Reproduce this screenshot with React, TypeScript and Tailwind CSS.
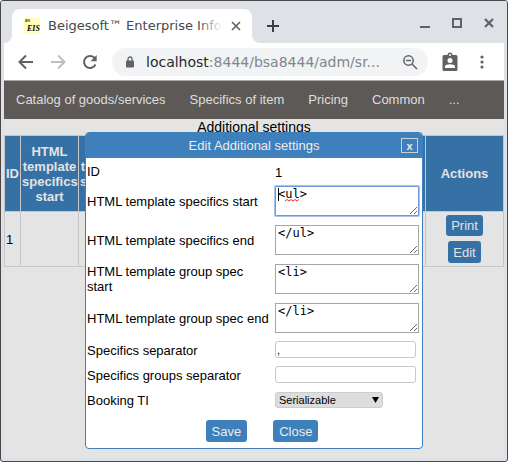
import type { ReactNode } from "react";

const menuItems = ["Catalog of goods/services", "Specifics of item", "Pricing", "Common", "..."];

function TabStrip() {
  return (
    <div className="flex h-[42px] items-end justify-between bg-[#dee1e6]">
      <div className="flex items-center">
        <div className="relative ml-[11px] flex h-[34px] w-60 items-center self-end rounded-t-lg bg-white pl-3">
          <svg viewBox="0 0 8 8" className="absolute bottom-0 -left-2 size-2" aria-hidden="true">
            <path d="M8 0v8H0a8 8 0 0 0 8-8z" fill="#fff" />
          </svg>
          <svg viewBox="0 0 8 8" className="absolute -right-2 bottom-0 size-2" aria-hidden="true">
            <path d="M0 0v8h8a8 8 0 0 1-8-8z" fill="#fff" />
          </svg>
          <svg viewBox="0 0 16 16" className="size-4 shrink-0" aria-hidden="true">
            <rect width="16" height="16" fill="#ffffb8" />
            <text x="1" y="4" fontSize="4" fontFamily="Liberation Serif, serif" fontStyle="italic" fontWeight="bold">BS</text>
            <text x="3" y="13" fontSize="8" fontFamily="Liberation Serif, serif" fontStyle="italic" fontWeight="bold">EIS</text>
          </svg>
          <div className="relative ml-2 w-[174px] overflow-hidden text-[13px] leading-5 whitespace-nowrap text-[#45484c]">
            Beigesoft™ Enterprise Info
            <div className="absolute inset-y-0 right-0 w-6 bg-linear-to-r from-transparent to-white" />
          </div>
          <button type="button" aria-label="Close tab" className="ml-1 p-1">
            <svg viewBox="0 0 12 12" className="size-3" stroke="#5f6368" strokeWidth="1.7">
              <path d="M2 2l8 8M10 2l-8 8" />
            </svg>
          </button>
        </div>
        <button type="button" aria-label="New tab" className="ml-[14px] p-px">
          <svg viewBox="0 0 12 12" className="size-3" stroke="#3c4043" strokeWidth="2">
            <path d="M6 0v12M0 6h12" />
          </svg>
        </button>
      </div>
      <div className="mb-[14px] flex items-center gap-5 pr-3">
        <button type="button" aria-label="Minimize">
          <svg viewBox="0 0 12 12" className="size-3">
            <path d="M1 9h10v2H1z" fill="#5f6368" />
          </svg>
        </button>
        <button type="button" aria-label="Maximize">
          <svg viewBox="0 0 12 12" className="size-3" fill="none" stroke="#5f6368" strokeWidth="2">
            <path d="M2 2h8v8H2z" />
          </svg>
        </button>
        <button type="button" aria-label="Close window">
          <svg viewBox="0 0 12 12" className="size-3" stroke="#5f6368" strokeWidth="2.2">
            <path d="M2 2l8 8M10 2l-8 8" />
          </svg>
        </button>
      </div>
    </div>
  );
}

function Toolbar() {
  return (
    <div className="flex h-[38px] items-center border-b border-[#a9a9ab] bg-white pr-[14px] pl-3">
      <button type="button" aria-label="Back">
        <svg viewBox="0 0 20 20" className="size-5" fill="none" stroke="#5f6368" strokeWidth="2">
          <path d="M17 10H4M10 3.500L3.500 10L10 16.500" />
        </svg>
      </button>
      <button type="button" aria-label="Forward" className="ml-3">
        <svg viewBox="0 0 20 20" className="size-5" fill="none" stroke="#bcbec1" strokeWidth="2">
          <path d="M3 10h13M10 3.500l6.500 6.500L10 16.500" />
        </svg>
      </button>
      <button type="button" aria-label="Reload" className="ml-3">
        <svg viewBox="0 0 20 20" className="size-5" fill="none" stroke="#5f6368" strokeWidth="2">
          <path d="M15.500 12.500A6 6 0 1 1 14.300 5.700L15.500 7" />
          <path d="M16.700 3v6.200h-6.200z" fill="#5f6368" stroke="none" />
        </svg>
      </button>
      <div className="ml-3 flex h-7 min-w-0 flex-1 items-center rounded-full bg-[#f1f3f4] pr-[10px] pl-[14px]">
        <svg viewBox="0 0 8 12" className="h-3 w-2 shrink-0" aria-hidden="true">
          <path d="M2 5V3a2 2 0 0 1 4 0v2" fill="none" stroke="#5f6368" strokeWidth="1.300" />
          <rect y="4.500" width="8" height="7" rx="1" fill="#5f6368" />
        </svg>
        <div className="ml-3 min-w-0 flex-1 truncate text-sm text-[#80868b]">
          <span className="text-[#27292c]">localhost</span>:8444/bsa8444/adm/sr...
        </div>
        <button type="button" aria-label="Zoom" className="shrink-0">
          <svg viewBox="0 0 16 16" className="size-4" fill="none" stroke="#5f6368" strokeWidth="1.500">
            <circle cx="6.500" cy="6.500" r="4.700" />
            <path d="M4 6.500h5M10 10l5 5" />
          </svg>
        </button>
      </div>
      <button type="button" aria-label="Profile" className="ml-[14px]">
        <svg viewBox="0 0 16 20" className="h-5 w-4">
          <path d="M2 3h3.500a2.500 2.500 0 0 1 5 0H14q1.500 0 1.500 1.500v13q0 1.500-1.500 1.500H2q-1.500 0-1.500-1.500v-13Q.5 3 2 3z" fill="#5f6368" />
          <circle cx="8" cy="3" r="1" fill="#fff" />
          <circle cx="8" cy="8.500" r="2.500" fill="#fff" />
          <path d="M3 16v-1.500c0-3 10-3 10 0V16z" fill="#fff" />
        </svg>
      </button>
      <button type="button" aria-label="Menu" className="ml-4">
        <svg viewBox="0 0 16 16" className="size-4" fill="#5f6368">
          <circle cx="8" cy="3" r="1.600" />
          <circle cx="8" cy="8" r="1.600" />
          <circle cx="8" cy="13" r="1.600" />
        </svg>
      </button>
    </div>
  );
}

function SettingsTable() {
  const head = "border border-[#c6c6c6] bg-[#3671a6] p-px font-bold text-[#e3e3e3]";
  const cell = "border border-[#c6c6c6] p-px";
  const action = "rounded-[3px] bg-[#3671a6] px-[5px] text-[13px] text-[#e3e3e3]";
  return (
    <table className="w-full table-fixed border-collapse text-[13px] leading-[15px]">
      <caption className="h-4 text-sm leading-4 text-black">Additional settings</caption>
      <colgroup>
        <col className="w-4" />
        <col className="w-[58px]" />
        <col className="w-[58px]" />
        <col />
        <col className="w-[78px]" />
      </colgroup>
      <thead>
        <tr className="h-[76px]">
          <th className={head}>ID</th>
          <th className={head}>HTML template specifics start</th>
          <th className={head}>HTML template specifics end</th>
          <th className={head} />
          <th className={head}>Actions</th>
        </tr>
      </thead>
      <tbody>
        <tr className="h-[55px]">
          <td className={cell}>1</td>
          <td className={cell} />
          <td className={cell} />
          <td className={cell} />
          <td className={cell}>
            <div className="flex flex-col items-center gap-[5px]">
              <button type="button" className={action + " h-[21px]"}>Print</button>
              <button type="button" className={action + " h-[22px]"}>Edit</button>
            </div>
          </td>
        </tr>
      </tbody>
    </table>
  );
}

function Field({ id, label, tall, children }: { id: string; label: string; tall?: boolean; children: ReactNode }) {
  return (
    <div className={"grid grid-cols-[183px_1fr] items-center gap-x-[5px] " + (tall ? "h-[39px]" : "h-[25px]")}>
      <label htmlFor={id} className="pt-px">{label}</label>
      <div className="relative flex">{children}</div>
    </div>
  );
}

function EditDialog() {
  const area = "block h-[30px] w-full resize overflow-hidden border bg-white px-[2px] text-xs leading-[14px] outline-none font-['DejaVu_Sans_Mono',monospace]";
  const input = "h-[17px] w-[141px] rounded-[3px] border border-[#c8c8c8] bg-white px-px text-[11px] outline-none";
  const button = "h-[22px] rounded-[3px] bg-[#3d80bb] px-[6px] text-[#ececec]";
  return (
    <div
      role="dialog"
      aria-label="Edit Additional settings"
      className="absolute top-[131px] left-1/2 w-[338px] -translate-x-1/2 overflow-hidden rounded border border-[#3d80bb] bg-white text-[13px] leading-[15px] text-black"
    >
      <div className="relative flex h-[25px] items-center justify-center bg-[#3d80bb] text-[#ececec]">
        <h2>Edit Additional settings</h2>
        <button type="button" aria-label="Close dialog" className="absolute right-1 flex h-[15px] w-[17px] items-center justify-center border border-[#d0d0d0] text-[11px] leading-3 font-bold">
          x
        </button>
      </div>
      <form>
        <div className="pr-[3px] pl-px">
          <div className="grid h-[23px] grid-cols-[183px_1fr] items-center gap-x-[5px] pt-1">
            <span>ID</span>
            <span className="pt-px">1</span>
          </div>
          <Field id="specStart" label="HTML template specifics start" tall>
            <textarea id="specStart" defaultValue="<ul>" className={area + " rounded-[1px] border-[#6f96dc] ring-1 ring-[#a9c3f3]"} />
            <div className="absolute top-[2px] left-[3px] h-[13px] w-px bg-black" />
            <svg viewBox="0 0 14 3" className="absolute top-[13px] left-[10px] h-[3px] w-[14px]" fill="none" stroke="#ee3333" aria-hidden="true">
              <path d="M0 2l2-1.500 2 1.500 2-1.500 2 1.500 2-1.500 2 1.500 2-1.500" />
            </svg>
          </Field>
          <Field id="specEnd" label="HTML template specifics end" tall>
            <textarea id="specEnd" defaultValue="</ul>" className={area + " border-[#a6a6a6]"} />
          </Field>
          <Field id="groupStart" label="HTML template group spec start" tall>
            <textarea id="groupStart" defaultValue="<li>" className={area + " border-[#a6a6a6]"} />
          </Field>
          <Field id="groupEnd" label="HTML template group spec end" tall>
            <textarea id="groupEnd" defaultValue="</li>" className={area + " border-[#a6a6a6]"} />
          </Field>
          <Field id="separator" label="Specifics separator">
            <input id="separator" defaultValue="," className={input} />
          </Field>
          <Field id="groupsSeparator" label="Specifics groups separator">
            <input id="groupsSeparator" className={input} />
          </Field>
          <Field id="booking" label="Booking TI">
            <select id="booking" className="h-4 w-[108px] appearance-none rounded-[3px] border border-[#cccccc] bg-[#dddddd] px-[3px] text-[11px] leading-[14px] outline-none">
              <option>Serializable</option>
            </select>
            <svg viewBox="0 0 7 6" className="pointer-events-none absolute top-[5px] left-[97px] h-[6px] w-[7px]" aria-hidden="true">
              <path d="M0 0h7L3.500 6z" />
            </svg>
          </Field>
        </div>
        <div className="flex justify-center gap-[26px] pt-2 pb-[6px] pl-4">
          <button type="button" className={button}>Save</button>
          <button type="button" className={button}>Close</button>
        </div>
      </form>
    </div>
  );
}

export default function App() {
  return (
    <div className="h-screen bg-white font-['Liberation_Sans',Arial,sans-serif]">
      <div className="relative flex h-full flex-col overflow-hidden rounded-[3px] border border-[#4b4648] bg-[#dee1e6]">
        <div className="font-['DejaVu_Sans',sans-serif]">
          <TabStrip />
        </div>
        <div className="mr-[3px] mb-[3px] ml-[3px] flex flex-1 flex-col bg-[#e4e4e4]">
          <div className="font-['DejaVu_Sans',sans-serif]">
            <Toolbar />
          </div>
          <nav className="flex h-[38px] items-center gap-6 bg-[#5d5957] px-3 text-[13px] whitespace-nowrap text-[#dedede]">
            {menuItems.map((item) => (
              <a key={item} href="#">{item}</a>
            ))}
          </nav>
          <SettingsTable />
        </div>
        <EditDialog />
      </div>
    </div>
  );
}
